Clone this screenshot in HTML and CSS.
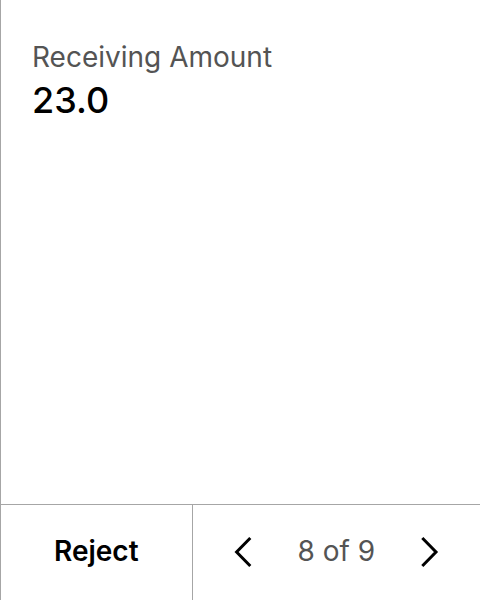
FILE: index.html
```html
<!DOCTYPE html>
<html lang="en">
<head>
<meta charset="utf-8">
<meta name="viewport" content="width=device-width, initial-scale=1">
<title>Review transaction</title>
<link rel="stylesheet" href="styles.css">
</head>
<body>
<main class="screen">
  <dl class="field">
    <dt class="field-label">Receiving Amount</dt>
    <dd class="field-value">23.0</dd>
  </dl>
  <footer class="footer">
    <button class="reject" type="button">Reject</button>
    <nav class="pager">
      <button class="arrow" type="button" aria-label="Previous page">
        <svg class="icon" viewBox="0 0 40 40"><path d="M26.3 6 12.6 20 26.3 34"/></svg>
      </button>
      <span class="page">8 of 9</span>
      <button class="arrow" type="button" aria-label="Next page">
        <svg class="icon" viewBox="0 0 40 40"><path d="M13.3 6 27 20 13.3 34"/></svg>
      </button>
    </nav>
  </footer>
</main>
</body>
</html>
```

FILE: styles.css
```css
* {
  box-sizing: border-box;
}

body {
  margin: 0;
  background: #fff;
  color: #000;
  font-family: Inter, sans-serif;
}

.screen {
  display: flex;
  flex-direction: column;
  min-height: 100vh;
  border-left: 1px solid #a6a6a6;
}

.field {
  flex: 1;
  margin: 0;
  padding: 39px 31px;
}

.field-label {
  color: #545454;
  font-size: 28px;
  line-height: 36px;
}

.field-value {
  margin: 5px 0 0;
  font-size: 36px;
  font-weight: 500;
  line-height: 40px;
}

.footer {
  display: grid;
  grid-template-columns: 2fr 3fr;
  height: 96px;
  border-top: 1px solid #a6a6a6;
}

.reject {
  padding: 0 0 3px;
  border: 0;
  border-right: 1px solid #a6a6a6;
  background: none;
  color: inherit;
  font: 600 28px/36px Inter, sans-serif;
}

.pager {
  display: flex;
  align-items: center;
  justify-content: space-between;
  padding: 0 31px 1px;
}

.arrow {
  display: flex;
  padding: 0;
  border: 0;
  background: none;
  color: inherit;
}

.icon {
  width: 40px;
  height: 40px;
  fill: none;
  stroke: currentColor;
  stroke-width: 3;
}

.page {
  padding-bottom: 2px;
  color: #545454;
  font-size: 28px;
  line-height: 36px;
}
```
